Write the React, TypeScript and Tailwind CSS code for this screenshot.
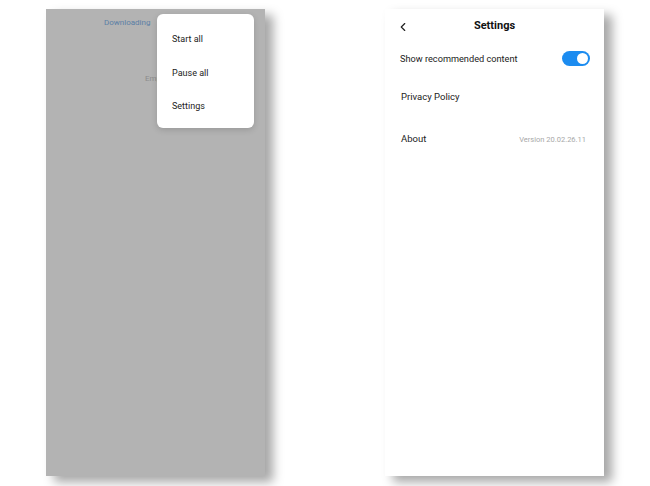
import { ChevronLeft } from "lucide-react";

const font = { fontFamily: "Roboto, 'Noto Sans', sans-serif" };

const MenuItem = ({ label }: { label: string }) => (
  <div className="h-[33.5px] flex items-center pl-[15px] text-[9px] text-[#222]">{label}</div>
);

export default function App() {
  return (
    <div className="w-[650px] h-[486px] bg-white flex items-start pt-[9px] pl-[46px] gap-[120px]" style={font}>
      {/* left phone: overflow menu over dimmed downloads page */}
      <div className="relative w-[219px] h-[467px] bg-[#b3b3b3] shadow-[8px_6px_10px_rgba(0,0,0,0.35)]">
        <div className="pt-[8px] pl-[58px] text-[8px] text-[#5b7fa6]">Downloading</div>
        <div className="mt-[44px] pl-[99px] text-[8px] text-[#8c8c8c]">Empty</div>

        <div className="absolute left-[111px] top-[5px] w-[97px] h-[114px] bg-white rounded-[6px] pt-[9px] shadow-[0_2px_6px_rgba(0,0,0,0.15)]">
          <MenuItem label="Start all" />
          <MenuItem label="Pause all" />
          <MenuItem label="Settings" />
        </div>
      </div>

      {/* right phone: settings screen */}
      <div className="w-[219px] h-[467px] bg-white flex flex-col shadow-[8px_6px_10px_rgba(0,0,0,0.35)]">
        <div className="h-[34px] flex items-center relative pt-[1px]">
          <ChevronLeft className="w-[14px] h-[14px] ml-[11px] text-[#222]" strokeWidth={2} />
          <span className="absolute inset-x-0 text-center text-[11px] font-bold text-[#111] pointer-events-none">Settings</span>
        </div>
        <div className="h-[31px] flex items-center justify-between pl-[15px] pr-[14px]">
          <span className="text-[9.2px] text-[#222]">Show recommended content</span>
          <div className="w-[28px] h-[15px] rounded-full bg-[#1c8cf0] flex items-center justify-end pr-[2px]">
            <div className="w-[11px] h-[11px] rounded-full bg-white" />
          </div>
        </div>
        <div className="h-[46px] flex items-center pl-[16px] text-[9.5px] text-[#222]">Privacy Policy</div>
        <div className="h-[39px] flex items-center justify-between pl-[16px] pr-[18px]">
          <span className="text-[9.5px] text-[#222]">About</span>
          <span className="text-[7.5px] text-[#a8a8a8]">Version 20.02.26.11</span>
        </div>
      </div>
    </div>
  );
}
